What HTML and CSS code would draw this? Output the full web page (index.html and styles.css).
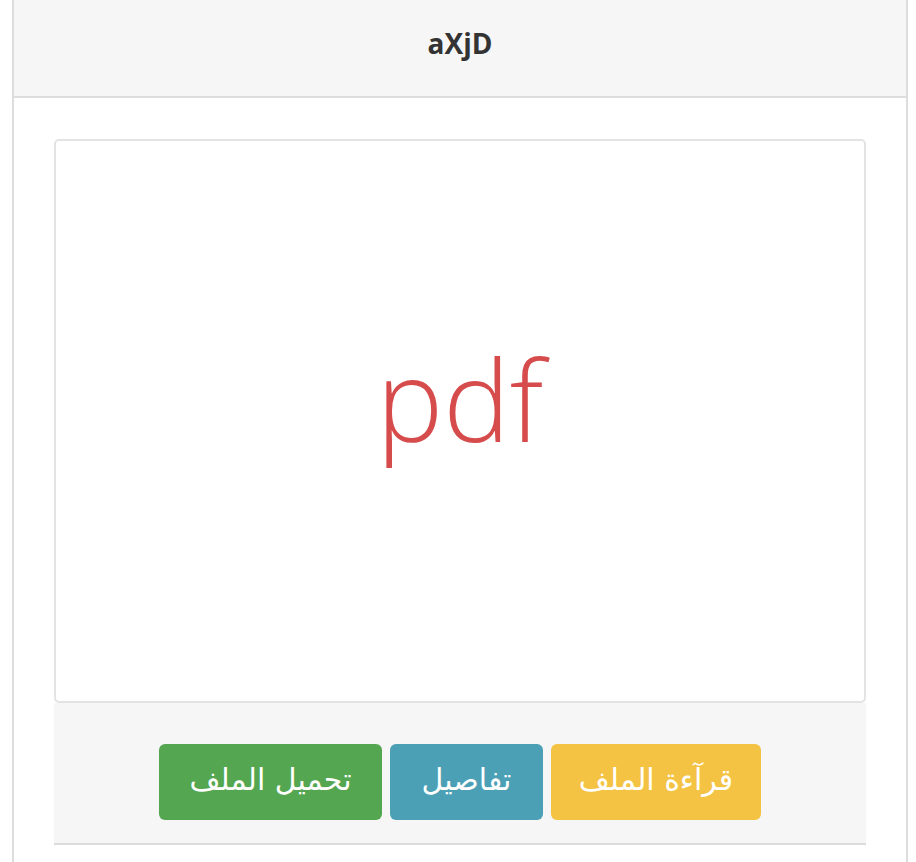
FILE: index.html
```html
<!DOCTYPE html>
<html lang="ar">
<head>
<meta charset="utf-8">
<title>aXjD</title>
<link rel="stylesheet" href="styles.css">
</head>
<body>
<div class="panel">
  <div class="panel-heading">
    <h3 class="panel-title">aXjD</h3>
  </div>
  <div class="panel-body">
    <div class="thumb">
      <span class="file-type">pdf</span>
    </div>
    <div class="thumb-footer" dir="rtl">
      <a class="btn btn-read" href="#">قرآءة الملف</a>
      <a class="btn btn-info" href="#">تفاصيل</a>
      <a class="btn btn-download" href="#">تحميل الملف</a>
    </div>
  </div>
</div>
</body>
</html>
```
FILE: styles.css
```css
html, body {
  margin: 0;
  padding: 0;
  background: #ffffff;
}

body {
  font-family: "Open Sans", "DejaVu Sans", sans-serif;
  color: #333333;
}

.panel {
  margin: 0 8px 0 12px;
  border-left: 2px solid #dddddd;
  border-right: 2px solid #dddddd;
  min-height: 862px;
  box-sizing: border-box;
}

.panel-heading {
  height: 96px;
  background: #f6f6f6;
  border-bottom: 2px solid #dddddd;
  display: flex;
  align-items: center;
  justify-content: center;
}

.panel-title {
  margin: 0;
  font-family: "Open Sans", sans-serif;
  font-weight: 700;
  font-size: 28px;
  color: #333333;
  padding-bottom: 10px;
}

.panel-body {
  padding: 41px 40px 0;
}

.thumb {
  height: 564px;
  box-sizing: border-box;
  border: 2px solid #e3e3e3;
  border-radius: 5px;
  background: #ffffff;
  display: flex;
  align-items: center;
  justify-content: center;
}

.file-type {
  font-family: "Open Sans", sans-serif;
  font-weight: 350;
  font-size: 112px;
  line-height: 1;
  color: #d64b4b;
  padding-bottom: 44px;
}

.thumb-footer {
  background: #f6f6f6;
  border-bottom: 2px solid #dcdcdc;
  padding: 41px 0 23px;
  display: flex;
  justify-content: center;
  gap: 8px;
}

.btn {
  height: 76px;
  box-sizing: border-box;
  display: flex;
  align-items: center;
  justify-content: center;
  border-radius: 6px;
  color: #ffffff;
  text-decoration: none;
  font-family: "DejaVu Sans", sans-serif;
  font-size: 30px;
  padding-bottom: 6px;
}

.btn-read {
  width: 210px;
  background: #f4c343;
}

.btn-info {
  width: 153px;
  background: #4ba0b5;
}

.btn-download {
  width: 223px;
  background: #55a651;
}
```
